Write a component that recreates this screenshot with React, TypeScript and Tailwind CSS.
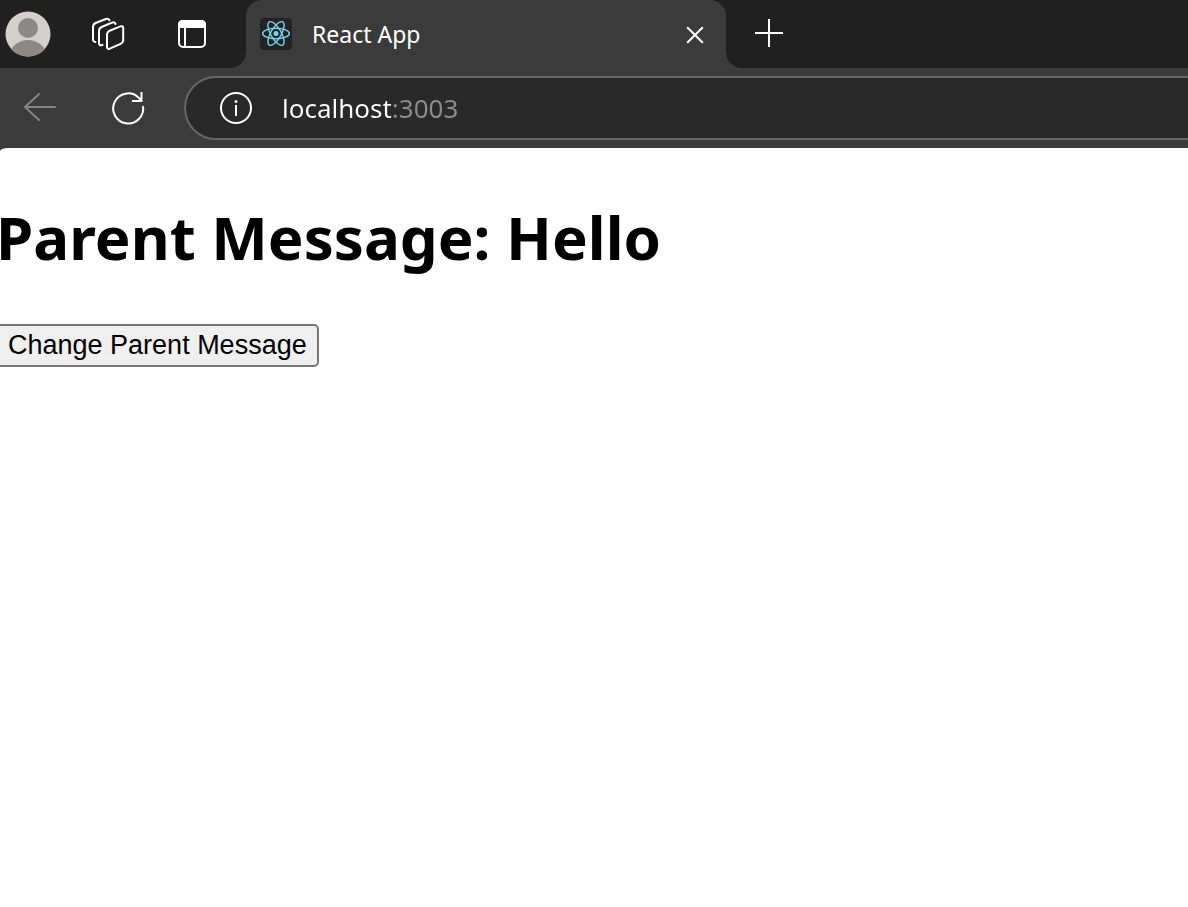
import { useState } from "react";

function Avatar() {
  return (
    <svg viewBox="0 0 46 46" className="size-[46px]" aria-hidden="true">
      <defs>
        <clipPath id="avatar-clip">
          <circle cx="23" cy="23" r="22.5" />
        </clipPath>
      </defs>
      <circle cx="23" cy="23" r="22.5" fill="#d1d0cd" />
      <g clipPath="url(#avatar-clip)" fill="#8a8988">
        <circle cx="23" cy="17" r="10" />
        <ellipse cx="23" cy="44" rx="18" ry="15" />
      </g>
    </svg>
  );
}

function WorkspacesIcon() {
  return (
    <svg viewBox="0 0 34 34" className="size-[34px]" fill="none" stroke="#fff" strokeWidth="2" strokeLinecap="round" strokeLinejoin="round" aria-hidden="true">
      <path d="M18.6 13.8 29.4 9.4Q32.2 8.4 32.2 11.2V23Q32.2 25.6 29.6 26.8L18.8 31.7Q16 32.6 16 30V17.6Q16 15 18.6 13.8Z" />
      <path d="M24.5 7Q23.5 4.6 21 5.7L10.6 10Q8 11.2 8 13.8V26Q8 29.4 11.5 27.8" />
      <path d="M18.5 3.2Q17.3 1 14.8 2L4.6 6Q2 7.2 2 9.8V22Q2 25 4.4 24.9" />
    </svg>
  );
}

function TabActionsIcon() {
  return (
    <svg viewBox="0 0 28 28" className="size-7" aria-hidden="true">
      <rect x="1" y="1" width="26" height="26" rx="4" fill="none" stroke="#fff" strokeWidth="2" />
      <path d="M0 8V5Q0 0 5 0H23Q28 0 28 5V8Z" fill="#fff" />
      <path d="M7 8V27" stroke="#fff" strokeWidth="2" />
    </svg>
  );
}

function ReactLogo() {
  return (
    <svg viewBox="0 0 32 32" className="size-8 shrink-0" aria-hidden="true">
      <rect width="32" height="32" rx="4" fill="#232323" />
      <g fill="none" stroke="#7cd0ee" strokeWidth="1.4">
        <ellipse cx="16" cy="15.5" rx="13.4" ry="5.2" />
        <ellipse cx="16" cy="15.5" rx="13.4" ry="5.2" transform="rotate(60 16 15.5)" />
        <ellipse cx="16" cy="15.5" rx="13.4" ry="5.2" transform="rotate(120 16 15.5)" />
      </g>
      <circle cx="16" cy="15.5" r="2.5" fill="#7cd0ee" />
    </svg>
  );
}

function TabStrip() {
  return (
    <div className="flex h-[68px]">
      <div className="flex shrink-0 items-center rounded-br-2xl bg-[#202020] pr-10 pl-[5px]">
        <button type="button" aria-label="Profile"><Avatar /></button>
        <button type="button" aria-label="Workspaces" className="ml-10"><WorkspacesIcon /></button>
        <button type="button" aria-label="Tab actions" className="ml-[53px]"><TabActionsIcon /></button>
      </div>
      <div className="w-[480px] shrink-0 bg-[#202020]">
        <div className="flex h-full items-center rounded-t-2xl bg-[#3b3b3b] pr-5 pl-[14px]">
          <ReactLogo />
          <span className="ml-5 flex-1 text-[23px] leading-8">React App</span>
          <button type="button" aria-label="Close tab">
            <svg viewBox="0 0 22 22" className="size-[22px]" fill="none" stroke="#fff" strokeWidth="2" strokeLinecap="round" aria-hidden="true">
              <path d="M3.7 4.7 18.3 19.3M18.3 4.7 3.7 19.3" />
            </svg>
          </button>
        </div>
      </div>
      <div className="flex flex-1 items-center rounded-bl-2xl bg-[#202020] pb-0.5 pl-7">
        <button type="button" aria-label="New tab">
          <svg viewBox="0 0 30 30" className="size-[30px]" stroke="#fff" strokeWidth="2" aria-hidden="true">
            <path d="M15 1V29M1 15H29" />
          </svg>
        </button>
      </div>
    </div>
  );
}

function Toolbar() {
  const [url, setUrl] = useState("localhost:3003");
  return (
    <div className="flex h-20 items-center overflow-hidden pl-[22px]">
      <button type="button" aria-label="Back" className="pb-0.5">
        <svg viewBox="0 0 36 32" className="h-8 w-9" fill="none" stroke="#858585" strokeWidth="2" strokeLinecap="round" strokeLinejoin="round" aria-hidden="true">
          <path d="M33 16H3M17 3 3 16 17 29" />
        </svg>
      </button>
      <button type="button" aria-label="Refresh" className="ml-[52px]">
        <svg viewBox="0 0 36 36" className="size-9" fill="none" stroke="#fff" strokeWidth="2" aria-hidden="true">
          <path d="M33 16A15 15 0 1 1 28.5 7.5L31.5 10.5" />
          <path d="M31.5 2V11H22" />
        </svg>
      </button>
      <div className="-mr-0.5 ml-[38px] flex h-16 flex-1 items-center rounded-l-full border-2 border-[#666] bg-[#292929] pl-8">
        <button type="button" aria-label="View site information">
          <svg viewBox="0 0 36 36" className="size-9" aria-hidden="true">
            <circle cx="18" cy="18" r="15" fill="none" stroke="#fff" strokeWidth="2" />
            <path d="M18 15V26" stroke="#fff" strokeWidth="2" />
            <circle cx="18" cy="11.5" r="1.5" fill="#fff" />
          </svg>
        </button>
        <input
          type="text"
          aria-label="Address"
          spellCheck={false}
          value={url}
          onChange={(e) => setUrl(e.target.value)}
          className="ml-7 h-10 min-w-0 flex-1 bg-[linear-gradient(to_right,#fff_109px,#8c8c8c_109px)] bg-clip-text text-[26px] text-transparent caret-white outline-none"
        />
      </div>
    </div>
  );
}

export default function App() {
  const [message, setMessage] = useState("Hello");
  return (
    <div className="flex min-h-screen flex-col overflow-x-hidden bg-[#3b3b3b] font-['Segoe_UI','Noto_Sans',sans-serif] text-white">
      <header>
        <TabStrip />
        <Toolbar />
      </header>
      <main className="flex-1 rounded-tl-[8px_3px] bg-white pt-[46px] text-black">
        <h1 className="-ml-1 text-[60px] leading-[86px] font-bold">Parent Message: {message}</h1>
        <button
          type="button"
          onClick={() => setMessage("Hello from Parent")}
          className="mt-11 -ml-1 h-[43px] rounded-[5px] border-2 border-[#767676] bg-[#efefef] px-[10px] pb-0.5 font-['Liberation_Sans',Arial,sans-serif] text-[27px] leading-8"
        >
          Change Parent Message
        </button>
      </main>
    </div>
  );
}
